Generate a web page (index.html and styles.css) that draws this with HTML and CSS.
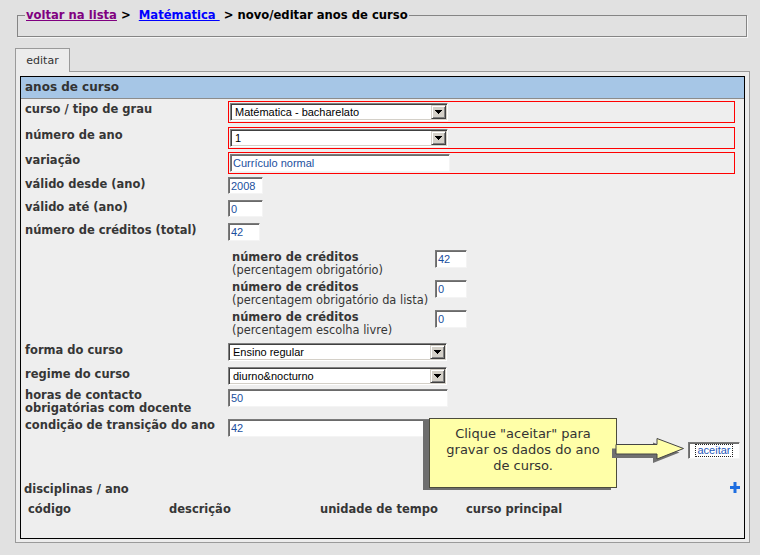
FILE: index.html
```html
<!DOCTYPE html>
<html lang="pt">
<head>
<meta charset="utf-8">
<title>novo/editar anos de curso</title>
<link rel="stylesheet" href="styles.css">
</head>
<body>
<div class="page">
  <fieldset class="crumbs">
    <legend><a class="visited" href="#">voltar na lista</a> &gt; &nbsp;<a class="link" href="#">Matématica&nbsp;</a> &gt; novo/editar anos de curso</legend>
  </fieldset>

  <div class="tab">editar</div>
  <div class="panel">
    <div class="box">
      <div class="head">anos de curso</div>
      <div class="form">
        <div class="row mb4">
          <div class="lbl pt1">curso / tipo de grau</div>
          <div class="req"><div class="combo"><span class="val">Matématica - bacharelato</span><span class="btn"><svg width="7" height="4" viewBox="0 0 7 4"><path d="M0 0h7v1h-1v1h-1v1h-1v1h-1v-1h-1v-1h-1v-1h-1z" fill="#000"/></svg></span></div></div>
        </div>
        <div class="row mb3">
          <div class="lbl pt1">número de ano</div>
          <div class="req"><div class="combo"><span class="val">1</span><span class="btn"><svg width="7" height="4" viewBox="0 0 7 4"><path d="M0 0h7v1h-1v1h-1v1h-1v1h-1v-1h-1v-1h-1v-1h-1z" fill="#000"/></svg></span></div></div>
        </div>
        <div class="row mb3">
          <div class="lbl pt1">variação</div>
          <div class="req"><div class="inp wide">Currículo normal</div></div>
        </div>
        <div class="row mb6">
          <div class="lbl">válido desde (ano)</div>
          <div class="inp small">2008</div>
        </div>
        <div class="row mb6">
          <div class="lbl">válido até (ano)</div>
          <div class="inp small">0</div>
        </div>
        <div class="row mb9">
          <div class="lbl">número de créditos (total)</div>
          <div class="inp small2">42</div>
        </div>
        <div class="row mb6">
          <div></div>
          <div class="credits">
            <div class="credit">
              <div class="clbl"><b>número de créditos</b><span>(percentagem obrigatório)</span></div>
              <div class="inp small2">42</div>
            </div>
            <div class="credit">
              <div class="clbl"><b>número de créditos</b><span>(percentagem obrigatório da lista)</span></div>
              <div class="inp small2">0</div>
            </div>
            <div class="credit last">
              <div class="clbl"><b>número de créditos</b><span>(percentagem escolha livre)</span></div>
              <div class="inp small2">0</div>
            </div>
          </div>
        </div>
        <div class="row mb6">
          <div class="lbl">forma do curso</div>
          <div class="combo alt"><span class="val">Ensino regular</span><span class="btn"><svg width="7" height="4" viewBox="0 0 7 4"><path d="M0 0h7v1h-1v1h-1v1h-1v1h-1v-1h-1v-1h-1v-1h-1z" fill="#000"/></svg></span></div>
        </div>
        <div class="row mb4">
          <div class="lbl">regime do curso</div>
          <div class="combo alt"><span class="val">diurno&amp;nocturno</span><span class="btn"><svg width="7" height="4" viewBox="0 0 7 4"><path d="M0 0h7v1h-1v1h-1v1h-1v1h-1v-1h-1v-1h-1v-1h-1z" fill="#000"/></svg></span></div>
        </div>
        <div class="row mb3">
          <div class="lbl two">horas de contacto<br>obrigatórias com docente</div>
          <div class="inp wide2">50</div>
        </div>
        <div class="row">
          <div class="lbl">condição de transição do ano</div>
          <div class="inp wide2 mt1">42</div>
        </div>
      </div>

      <div class="actions">
        <div class="submit"><span class="focus">aceitar</span></div>
      </div>

      <div class="disc">
        <div class="lbl">disciplinas / ano</div>
        <svg class="plus" width="10" height="11" viewBox="0 0 10 11"><path d="M3.5 0h3v4h3.5v3h-3.5v4h-3v-4h-3.5v-3h3.5z" fill="#1e6ee0"/></svg>
      </div>
      <div class="cols">
        <div class="lbl">código</div>
        <div class="lbl">descrição</div>
        <div class="lbl">unidade de tempo</div>
        <div class="lbl">curso principal</div>
      </div>

      <div class="callout">Clique "aceitar" para<br>gravar os dados do ano<br>de curso.</div>
      <svg class="arrow" width="80" height="40" viewBox="0 0 80 40">
        <polygon points="2,18.5 43,18.5 43,12.5 69.5,22.5 43,33 43,28 2,28" fill="#707070"/>
        <polygon points="6,14.5 47,14.5 47,8.5 73.5,18.5 47,29 47,24 6,24" fill="#ffffa8" stroke="#444" stroke-width="1"/>
      </svg>
    </div>
  </div>
</div>
</body>
</html>
```

FILE: styles.css
```css
html, body {
  margin: 0;
  padding: 0;
}
body {
  background: #e1e1e1;
  font-family: "DejaVu Sans", Verdana, sans-serif;
  color: #333;
  width: 760px;
  height: 555px;
  overflow: hidden;
}
.page {
  padding: 8px 10px 0 15px;
}

/* breadcrumb fieldset */
.crumbs {
  margin: 0 3px 0 2px;
  padding: 0 8px 13px 7px;
  border: 1px solid #858585;
  box-shadow: 1px 1px 0 #f6f6f6;
  min-width: 0;
}
.crumbs legend {
  padding: 0 1px;
  font-weight: bold;
  font-size: 11.6px;
  line-height: 15px;
  color: #000;
}
.crumbs a {
  text-decoration: underline;
}
.crumbs .visited { color: #800080; }
.crumbs .link { color: #0000ff; }

/* tab */
.tab {
  position: relative;
  width: 53px;
  height: 23px;
  margin-top: 11px;
  margin-bottom: -1px;
  border: 1px solid #9a9a9a;
  border-bottom: none;
  background: #ececec;
  font-size: 11px;
  line-height: 23px;
  text-align: center;
  color: #333;
}

/* panel */
.panel {
  border: 1px solid #9a9a9a;
  padding: 4px 4px 3px 4px;
  background: #ececec;
}
.box {
  position: relative;
  border: 1px solid #000;
  background: #eeeeee;
  padding-bottom: 22px;
}
.head {
  height: 21px;
  line-height: 21px;
  padding-left: 4px;
  background: #a6c6e6;
  border-bottom: 1px solid #8c8c8c;
  font-weight: bold;
  font-size: 12px;
  color: #333;
}

.form {
  padding: 2px 9px 0 4px;
}
.row {
  display: grid;
  grid-template-columns: 203px 1fr;
  align-items: start;
}
.mb3 { margin-bottom: 3px; }
.mb4 { margin-bottom: 4px; }
.mb6 { margin-bottom: 6px; }
.mb9 { margin-bottom: 9px; }
.pt1 { padding-top: 1px; }
.mt1 { margin-top: 1px; }

.lbl {
  font-weight: bold;
  font-size: 11.5px;
  line-height: 14px;
  color: #363636;
  white-space: nowrap;
}
.lbl.two {
  line-height: 13px;
}

.req {
  box-sizing: border-box;
  height: 22px;
  border: 1px solid #ff0000;
  padding: 1px;
}

/* fake select */
.combo {
  box-sizing: border-box;
  width: 218px;
  height: 18px;
  border: 1px solid;
  border-color: #808080 #ffffff #ffffff #808080;
  box-shadow: inset 1px 1px 0 #404040, inset -1px -1px 0 #d4d0c8;
  background: #fff;
  display: flex;
  align-items: center;
  font-family: "Liberation Sans", Arial, sans-serif;
  font-size: 11px;
  color: #000;
}
.combo.alt { width: 219px; }
.combo .val {
  flex: 1;
  padding-left: 4px;
  white-space: nowrap;
}
.combo .btn {
  box-sizing: border-box;
  width: 15px;
  height: 14px;
  margin-right: 1px;
  background: #d4d0c8;
  border: 1px solid;
  border-color: #d4d0c8 #404040 #404040 #d4d0c8;
  box-shadow: inset 1px 1px 0 #ffffff, inset -1px -1px 0 #808080;
  display: flex;
  align-items: center;
  justify-content: center;
}
.combo .btn svg { display: block; }

/* fake text input */
.inp {
  box-sizing: border-box;
  height: 18px;
  border: 1px solid;
  border-color: #7a7a7a #f4f4f4 #f4f4f4 #7a7a7a;
  box-shadow: inset 1px 1px 0 #6a6a6a;
  background: #fff;
  font-family: "Liberation Sans", Arial, sans-serif;
  font-size: 11px;
  line-height: 17px;
  padding: 0 2px;
  color: #1b4f9e;
  white-space: nowrap;
  overflow: hidden;
}
.inp.wide { width: 220px; }
.inp.wide2 { width: 220px; }
.inp.small { width: 35px; height: 17px; line-height: 16px; }
.inp.small2 { width: 32px; height: 18px; }

/* credits block */
.credits {
  padding-left: 4px;
}
.credit {
  display: grid;
  grid-template-columns: 203px 32px;
  align-items: start;
  margin-bottom: 3px;
}
.credit.last { margin-bottom: 0; }
.clbl {
  margin-top: 1px;
  font-size: 11.4px;
  line-height: 13px;
  color: #363636;
  white-space: nowrap;
}
.clbl b {
  display: block;
  font-size: 11.5px;
}
.clbl span { display: block; }

/* actions */
.actions {
  display: flex;
  justify-content: flex-end;
  padding-right: 4px;
  margin-top: 5px;
}
.submit {
  box-sizing: border-box;
  width: 52px;
  height: 17px;
  border: 1px solid;
  border-color: #7a7a7a #f4f4f4 #f4f4f4 #7a7a7a;
  box-shadow: inset 1px 1px 0 #6a6a6a;
  background: #fff;
  display: flex;
  align-items: center;
  justify-content: center;
  font-family: "Liberation Sans", Arial, sans-serif;
  font-size: 11px;
  color: #1e56b8;
}
.submit .focus {
  border: 1px dotted #222;
  line-height: 11px;
  padding: 0 1px;
}

/* disciplinas */
.disc {
  display: flex;
  justify-content: space-between;
  align-items: center;
  margin-top: 23px;
  padding: 0 4px 0 3px;
}
.plus { display: block; margin-top: -3px; }
.cols {
  display: grid;
  grid-template-columns: 141px 151px 146px 1fr;
  margin-top: 6px;
  padding-left: 7px;
}

/* callout overlay */
.callout {
  position: absolute;
  left: 408px;
  top: 341px;
  box-sizing: border-box;
  width: 188px;
  height: 70px;
  padding-top: 7px;
  border: 1px solid #4c4c3c;
  background: #ffffa8;
  box-shadow: -6px 2px 0 #6e6e6e;
  text-align: center;
  font-size: 13px;
  line-height: 16px;
  color: #333;
}
.arrow {
  position: absolute;
  left: 589px;
  top: 353px;
}
```
